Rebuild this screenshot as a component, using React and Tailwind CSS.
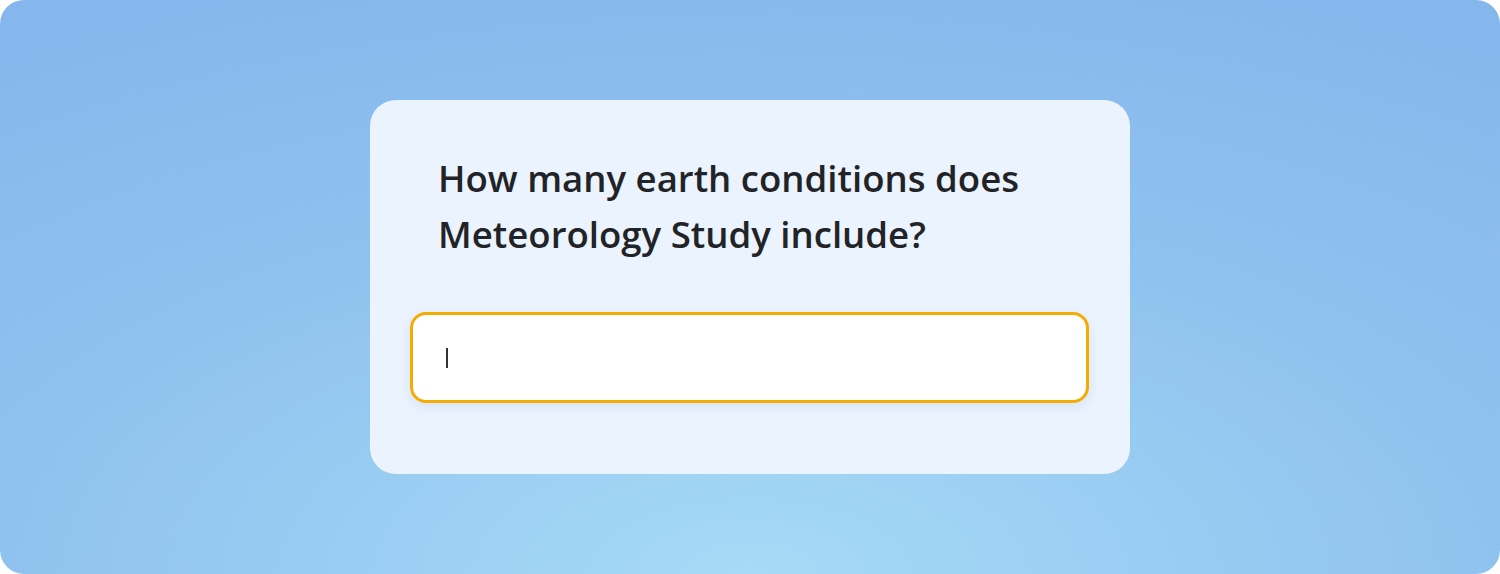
export default function App() {
  return (
    <div className="w-[1500px] h-[574px] bg-white">
      <div className="w-full h-full rounded-[24px] bg-[radial-gradient(ellipse_90%_110%_at_50%_100%,#a6daf6_0%,#90c2ef_55%,#86b7ec_100%)] flex justify-center pt-[100px]">
        <div className="w-[760px] h-[374px] rounded-[26px] bg-[#eaf3fe] pt-[50px]">
          <h1 className="pl-[68px] pr-[30px] text-[36.6px] leading-[56px] font-semibold text-[#222327] font-['Open_Sans',sans-serif]">
            How many earth conditions does Meteorology Study include?
          </h1>
          <div className="ml-[40px] mt-[50px] w-[679px] h-[91px] rounded-[16px] border-[3px] border-[#f5ab00] bg-white shadow-[0_4px_12px_rgba(30,60,120,0.08)] flex items-center pl-[33px]">
            <div className="w-[2px] h-[20px] bg-[#333]" />
          </div>
        </div>
      </div>
    </div>
  );
}
